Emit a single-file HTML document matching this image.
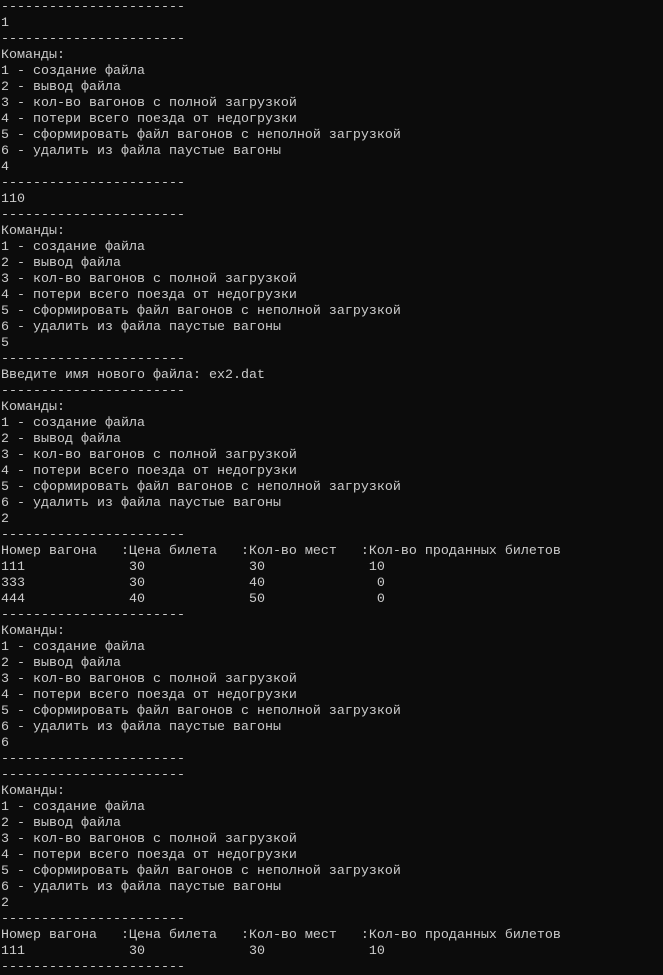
<!DOCTYPE html>
<html><head><meta charset="utf-8"><style>
html,body{margin:0;padding:0;background:#0c0c0c;width:663px;height:975px;overflow:hidden}
pre{margin:0;padding:0 0 0 1px;color:#cccccc;font-family:"Liberation Mono","DejaVu Sans Mono",monospace;font-size:13.33px;line-height:16px;white-space:pre}
</style></head><body><pre>-----------------------
1
-----------------------
Команды:
1 - создание файла
2 - вывод файла
3 - кол-во вагонов с полной загрузкой
4 - потери всего поезда от недогрузки
5 - сформировать файл вагонов с неполной загрузкой
6 - удалить из файла паустые вагоны
4
-----------------------
110
-----------------------
Команды:
1 - создание файла
2 - вывод файла
3 - кол-во вагонов с полной загрузкой
4 - потери всего поезда от недогрузки
5 - сформировать файл вагонов с неполной загрузкой
6 - удалить из файла паустые вагоны
5
-----------------------
Введите имя нового файла: ex2.dat
-----------------------
Команды:
1 - создание файла
2 - вывод файла
3 - кол-во вагонов с полной загрузкой
4 - потери всего поезда от недогрузки
5 - сформировать файл вагонов с неполной загрузкой
6 - удалить из файла паустые вагоны
2
-----------------------
Номер вагона   :Цена билета   :Кол-во мест   :Кол-во проданных билетов
111             30             30             10
333             30             40              0
444             40             50              0
-----------------------
Команды:
1 - создание файла
2 - вывод файла
3 - кол-во вагонов с полной загрузкой
4 - потери всего поезда от недогрузки
5 - сформировать файл вагонов с неполной загрузкой
6 - удалить из файла паустые вагоны
6
-----------------------
-----------------------
Команды:
1 - создание файла
2 - вывод файла
3 - кол-во вагонов с полной загрузкой
4 - потери всего поезда от недогрузки
5 - сформировать файл вагонов с неполной загрузкой
6 - удалить из файла паустые вагоны
2
-----------------------
Номер вагона   :Цена билета   :Кол-во мест   :Кол-во проданных билетов
111             30             30             10
-----------------------
</pre></body></html>
